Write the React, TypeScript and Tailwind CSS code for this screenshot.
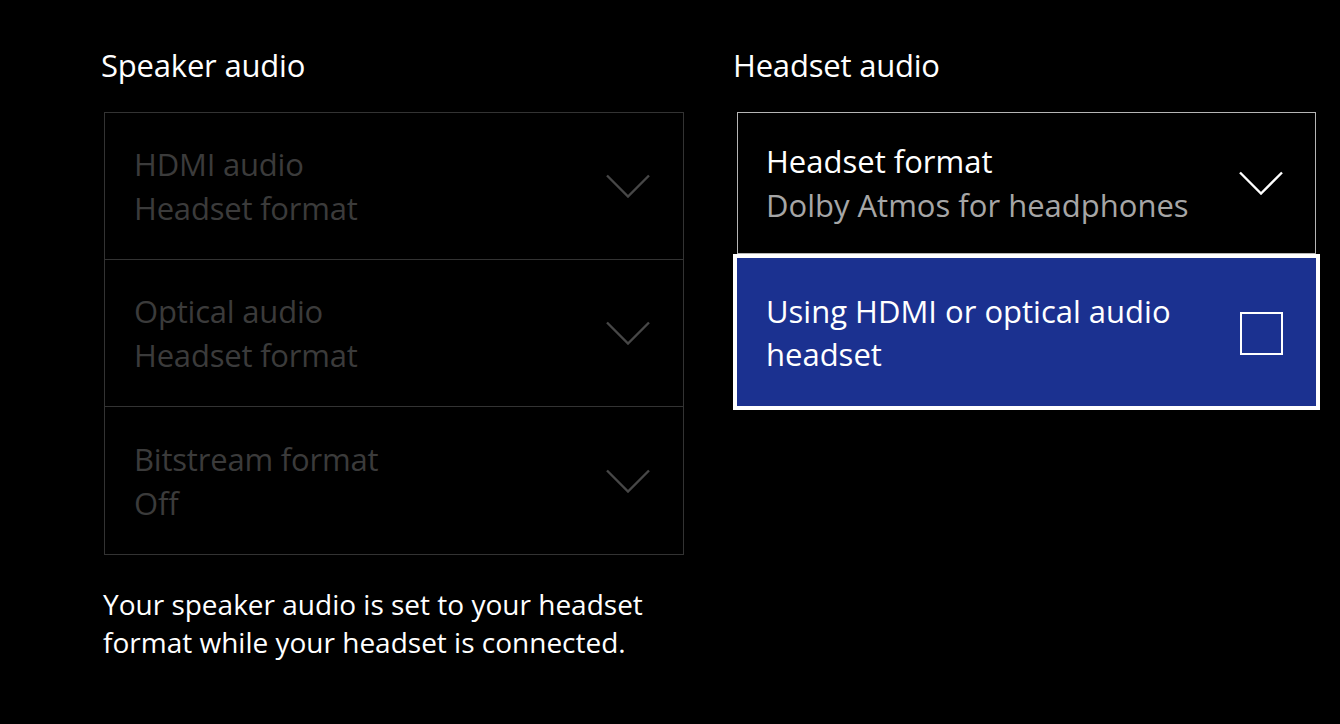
const font = { fontFamily: '"Open Sans", "Noto Sans", sans-serif' };

function Chevron({ color }: { color: string }) {
  return (
    <svg viewBox="0 0 44 24" className="h-[24px] w-[44px] shrink-0" fill="none" stroke={color} strokeWidth="2.4">
      <path d="M1 1.5l21 21 21-21" />
    </svg>
  );
}

function DisabledRow({ label, value, last }: { label: string; value: string; last?: boolean }) {
  return (
    <div
      className={`flex h-[147px] items-center justify-between pl-[29px] pr-[33px] ${last ? "" : "border-b border-[#333333]"}`}
    >
      <div className="text-[31px] leading-[44px] tracking-[-0.2px] text-[#3b3b3b]">
        <p>{label}</p>
        <p>{value}</p>
      </div>
      <Chevron color="#474747" />
    </div>
  );
}

export default function App() {
  return (
    <div className="h-[724px] w-[1340px] overflow-hidden bg-black text-white" style={font}>
      <div className="flex pl-[101px] pt-[44px]">
        {/* Speaker audio */}
        <div className="w-[583px]">
          <h2 className="h-[68px] text-[31px] leading-[42px] tracking-[-0.2px] text-white">Speaker audio</h2>
          <div className="ml-[3px] border border-[#333333]">
            <DisabledRow label="HDMI audio" value="Headset format" />
            <DisabledRow label="Optical audio" value="Headset format" />
            <DisabledRow label="Bitstream format" value="Off" last />
          </div>
          <p className="mt-[30px] ml-[2px] text-[28px] leading-[38px] text-white">
            Your speaker audio is set to your headset
            <br />
            format while your headset is connected.
          </p>
        </div>

        {/* Headset audio */}
        <div className="ml-[49px] w-[587px]">
          <h2 className="h-[68px] text-[31px] leading-[42px] tracking-[-0.2px] text-white">Headset audio</h2>
          <div className="mx-[4px] flex h-[142px] items-center justify-between border border-[#b5b5b5] pl-[28px] pr-[32px]">
            <div className="text-[31px] leading-[44px]">
              <p className="text-white">Headset format</p>
              <p className="text-[#a6a6a6]">Dolby Atmos for headphones</p>
            </div>
            <Chevron color="#ffffff" />
          </div>
          <div className="flex h-[156px] items-center justify-between border-[4px] border-white bg-[#1b3190] pl-[29px] pr-[33px] pt-[2px]">
            <p className="text-[31px] leading-[43px] text-white">
              Using HDMI or optical audio
              <br />
              headset
            </p>
            <div className="h-[43px] w-[43px] border-[2px] border-white" />
          </div>
        </div>
      </div>
    </div>
  );
}
